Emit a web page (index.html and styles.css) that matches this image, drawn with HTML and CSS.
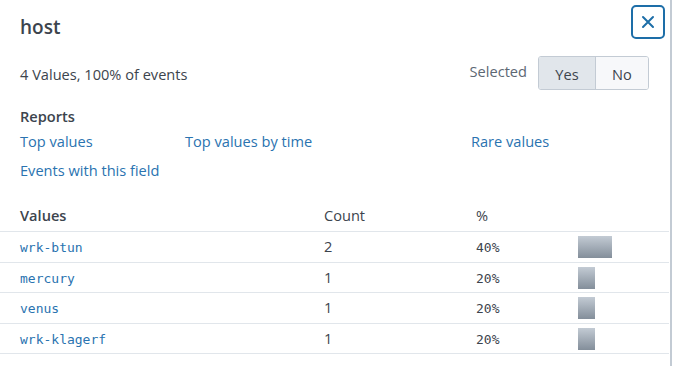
FILE: index.html
```html
<!DOCTYPE html>
<html>
<head>
<meta charset="utf-8">
<link rel="stylesheet" href="styles.css">
</head>
<body>
<div class="panel">
  <div class="header">
    <h1 class="title">host</h1>
    <button class="close" aria-label="Close">
      <svg width="14" height="14" viewBox="0 0 14 14"><path d="M2 2 L12 12 M12 2 L2 12" stroke="#1d6ea8" stroke-width="2" stroke-linecap="round" fill="none"/></svg>
    </button>
  </div>
  <div class="summary">
    <span class="count-text">4 Values, 100% of events</span>
    <div class="selected">
      <span class="sel-label">Selected</span>
      <div class="toggle">
        <span class="opt opt-on">Yes</span>
        <span class="opt">No</span>
      </div>
    </div>
  </div>
  <div class="reports">
    <div class="section-title">Reports</div>
    <div class="links">
      <a class="link">Top values</a>
      <a class="link">Top values by time</a>
      <a class="link">Rare values</a>
      <a class="link">Events with this field</a>
    </div>
  </div>
  <div class="table">
    <div class="row head">
      <span>Values</span><span class="light">Count</span><span class="light">%</span><span></span>
    </div>
    <div class="row">
      <span class="val">wrk-btun</span><span class="num">2</span><span class="pct">40%</span><span class="bar-cell"><span class="bar" style="width:34px"></span></span>
    </div>
    <div class="row">
      <span class="val">mercury</span><span class="num">1</span><span class="pct">20%</span><span class="bar-cell"><span class="bar" style="width:17px"></span></span>
    </div>
    <div class="row">
      <span class="val">venus</span><span class="num">1</span><span class="pct">20%</span><span class="bar-cell"><span class="bar" style="width:17px"></span></span>
    </div>
    <div class="row">
      <span class="val">wrk-klagerf</span><span class="num">1</span><span class="pct">20%</span><span class="bar-cell"><span class="bar" style="width:17px"></span></span>
    </div>
  </div>
</div>
</body>
</html>
```
FILE: styles.css
```css
html, body {
  margin: 0;
  padding: 0;
  background: #fff;
}
body {
  font-family: "Open Sans", Lato, sans-serif;
  color: #3c444d;
  font-size: 14.6px;
}
.panel {
  width: 672px;
  height: 366px;
  border-right: 2px solid #c3cbd4;
  box-sizing: border-box;
  overflow: hidden;
}
.header {
  display: flex;
  justify-content: space-between;
  align-items: flex-start;
  padding: 5px 5px 0 20px;
}
.title {
  margin: 12px 0 0 0;
  font-size: 19px;
  font-weight: 600;
  line-height: 20px;
  color: #3c444d;
}
.close {
  width: 34px;
  height: 34px;
  box-sizing: border-box;
  border: 2px solid #1d6ea8;
  border-radius: 5px;
  background: #fff;
  padding: 0;
  display: flex;
  align-items: center;
  justify-content: center;
}
.summary {
  display: flex;
  justify-content: space-between;
  align-items: center;
  padding: 17px 21px 0 20px;
}
.count-text {
  line-height: 20px;
  margin-top: 1px;
}
.selected {
  display: flex;
  align-items: center;
  gap: 11px;
}
.sel-label {
  color: #5c6773;
  line-height: 20px;
  margin-top: -4px;
}
.toggle {
  display: flex;
  border: 1px solid #c3cbd4;
  border-radius: 3px;
  overflow: hidden;
  height: 34px;
  box-sizing: border-box;
}
.opt {
  display: flex;
  align-items: center;
  justify-content: center;
  width: 52px;
  background: #f7f8fa;
  padding-top: 2px;
}
.opt-on {
  width: 56px;
  background: #e1e6eb;
  border-right: 1px solid #c3cbd4;
}
.reports {
  padding: 16px 20px 0 20px;
}
.section-title {
  font-weight: 600;
  line-height: 20px;
}
.links {
  display: grid;
  grid-template-columns: 165px 286px 1fr;
  row-gap: 9px;
  margin-top: 5px;
}
.link {
  color: #2a73b0;
  line-height: 20px;
}
.table {
  margin-top: 25px;
  width: 669px;
}
.row {
  display: grid;
  grid-template-columns: 304px 152px 102px 1fr;
  padding: 4px 0 0 20px;
  height: 30.5px;
  box-sizing: border-box;
  border-bottom: 1px solid #e1e6eb;
  align-items: baseline;
  line-height: 20px;
}
.row.head {
  height: 27px;
  padding-top: 0;
  align-items: start;
  font-weight: 600;
}
.row.head .light {
  font-weight: 400;
}
.val {
  font-family: "DejaVu Sans Mono", monospace;
  font-size: 13px;
  color: #2a73b0;
}
.pct {
  font-family: "DejaVu Sans Mono", monospace;
  font-size: 13px;
  color: #3c444d;
}
.num {
  color: #3c444d;
}
.bar-cell {
  display: flex;
  align-self: start;
}
.bar {
  display: block;
  height: 22px;
  background: linear-gradient(#c3cbd4, #838e9a);
}
```
